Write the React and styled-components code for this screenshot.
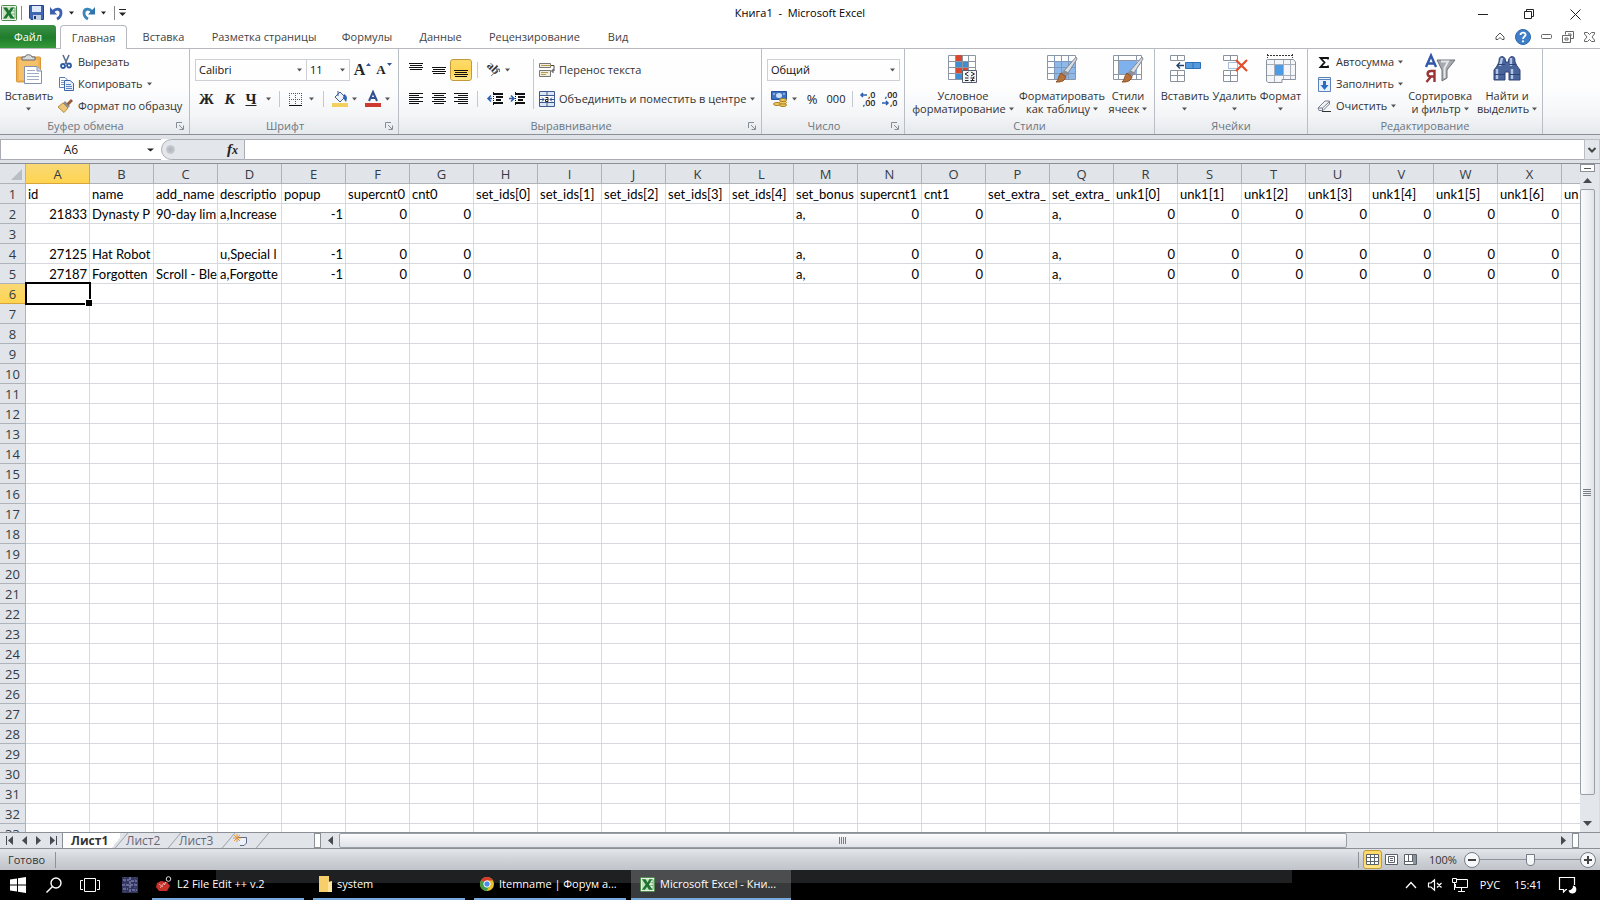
import React from "react";
import styled, { createGlobalStyle, css } from "styled-components";

const ui = '"Open Sans", "Noto Sans", sans-serif';
const line = "#8b9097";

const Global = createGlobalStyle`
  * { box-sizing: border-box; }
  body { margin: 0; background: #fff; font: 11px/16px ${ui}; color: #333; }
  button, input, select { font: inherit; color: inherit; margin: 0; padding: 0; border: 0; background: none; }
  button { white-space: nowrap; }
  svg { display: block; flex: none; overflow: visible; }
`;

const Window = styled.div`
  height: 100vh;
  display: flex;
  flex-direction: column;
  overflow: hidden;
`;

/* ---------- title bar ---------- */
const TitleBar = styled.header`
  display: grid;
  grid-template-columns: 1fr auto 1fr;
  align-items: center;
  height: 25px;
  flex: none;
`;
const QuickAccess = styled.div`
  display: flex;
  align-items: center;
  padding-left: 1px;
`;
const Title = styled.h1`
  margin: 0;
  font-size: 11px;
  font-weight: 400;
  color: #000;
  white-space: pre;
`;
const CaptionButtons = styled.div`
  display: flex;
  justify-content: flex-end;
  padding: 3px 2px 0 0;
`;
const CaptionButton = styled.button`
  width: 46px;
  height: 22px;
  display: grid;
  place-items: center;
`;
const Divider = styled.span`
  width: 1px;
  height: ${(p) => p.$h || 16}px;
  background: ${(p) => p.$c || "#c5c9ce"};
  margin: 0 ${(p) => p.$m || 0}px;
  flex: none;
`;
const IconBtn = styled.button`
  display: inline-flex;
  align-items: center;
  justify-content: ${(p) => p.$justify || "center"};
  width: ${(p) => (p.$w ? p.$w + "px" : "auto")};
  height: ${(p) => p.$h || 22}px;
  gap: ${(p) => p.$gap || 4}px;
  flex: none;
  ${(p) =>
    p.$on &&
    css`
      && { border: 1px solid #c29a3a; }
      border-radius: 3px;
      && { background: linear-gradient(#fddb6c, #ffd452 50%, #ffe88c); }
    `}
`;

/* ---------- ribbon tabs ---------- */
const TabStrip = styled.nav`
  display: flex;
  height: 24px;
  flex: none;
  border-bottom: 1px solid #b6babf;
`;
const FileTab = styled.button`
  && {
    width: 56px;
    height: 23px;
    border-radius: 0 3px 0 0;
    color: #fff;
    background: linear-gradient(#3c9148, #1f7e2b 55%, #35983a);
  }
`;
const RibbonTab = styled.button`
  && {
    width: ${(p) => p.$w}px;
    height: 24px;
    color: #444;
    ${(p) =>
      p.$active &&
      css`
        margin-left: 4px;
        border: 1px solid #b6babf;
        border-bottom: 0;
        border-radius: 4px 4px 0 0;
        background: #fff;
      `}
  }
`;
const TabTools = styled.div`
  margin-left: auto;
  display: flex;
  align-items: center;
  gap: 10px;
  padding-right: 5px;
`;

/* ---------- ribbon ---------- */
const Ribbon = styled.section`
  display: flex;
  height: 86px;
  flex: none;
  background: linear-gradient(#fff, #fdfdfe 50%, #f3f5f7 78%, #e6e9ed);
  border-bottom: 1px solid ${line};
`;
const Group = styled.section`
  flex: 0 0 ${(p) => p.$w}px;
  min-width: 0;
  display: flex;
  flex-direction: column;
  border-right: 1px solid #b9bdc4;
`;
const GroupBody = styled.div`
  height: 69px;
  display: flex;
  padding: ${(p) => p.$pad};
`;
const GroupFooter = styled.footer`
  display: flex;
  align-items: center;
  height: 16px;
  text-align: center;
  color: #6b7680;
  h2 { flex: 1; margin: 0; font-size: 11px; line-height: 16px; font-weight: 400; }
`;
const Stack = styled.div`
  display: flex;
  flex-direction: column;
  flex: none;
  gap: ${(p) => p.$gap || 0}px;
`;
const Row = styled.div`
  display: flex;
  align-items: center;
  height: 22px;
`;
const BigButton = styled.button`
  && {
    width: ${(p) => p.$w}px;
    padding-top: 3px;
    display: flex;
    flex-direction: column;
    align-items: center;
    line-height: 13px;
    flex: none;
  }
`;
const BigLabel = styled.span`
  margin-top: 5px;
  display: flex;
  flex-direction: column;
  align-items: center;
`;
const LabelLine = styled.span`
  display: flex;
  align-items: center;
  gap: 3px;
  height: 13px;
`;
const SmallIcon = styled.span`
  display: grid;
  place-items: center;
  width: 16px;
`;
const SelectBox = styled.span`
  display: grid;
  align-items: center;
  width: ${(p) => p.$w}px;
  height: 22px;
  border: 1px solid #cdd1d6;
  & + & { border-left: 0; }
  select { grid-area: 1 / 1; appearance: none; width: 100%; height: 20px; padding-left: 3px; color: #111; outline: 0; }
  svg { grid-area: 1 / 1; justify-self: end; margin-right: 4px; pointer-events: none; }
`;
const Glyph = styled.span`
  font-family: "Liberation Serif", serif;
  font-weight: 700;
  font-size: ${(p) => p.$s || 15}px;
  line-height: 16px;
  color: #222;
  font-style: ${(p) => (p.$i ? "italic" : "normal")};
  text-decoration: ${(p) => (p.$u ? "underline" : "none")};
`;
const NumGlyph = styled.span`
  font-size: ${(p) => p.$s || 11}px;
  color: #222;
`;
const DecimalIcon = styled.span`
  display: flex;
  flex-direction: column;
  width: 17px;
  font-size: 9px;
  line-height: 8px;
  font-weight: 600;
  color: #222;
`;
const DecimalRow = styled.span`
  display: flex;
  align-items: center;
  justify-content: flex-end;
  gap: 1px;
`;

/* ---------- formula bar ---------- */
const FormulaBar = styled.div`
  display: flex;
  flex: none;
  height: 29px;
  padding: 4px 0 3px;
  background: #dfe2e7;
  border-bottom: 1px solid ${line};
`;
const NameBox = styled.div`
  display: flex;
  align-items: center;
  width: 161px;
  border: 1px solid #a9adb3;
  border-right: 0;
  background: #fff;
  input { width: 140px; text-align: center; font-size: 12px; color: #222; outline: 0; }
`;
const FxWrap = styled.div`
  display: flex;
  background: #fff;
`;
const FxArea = styled.div`
  display: flex;
  align-items: center;
  justify-content: space-between;
  width: 84px;
  padding: 0 6px 0 4px;
  border: 1px solid #a9adb3;
  border-radius: 11px 0 0 11px;
  background: #e3e6ea;
`;
const Knob = styled.span`
  width: 9px;
  height: 9px;
  border-radius: 50%;
  background: radial-gradient(#aeb3ba, #d5d9de);
`;
const Fx = styled.button`
  && { font: italic 700 15px/18px "Liberation Serif", serif; color: #222; }
  small { font-size: 12px; }
`;
const FormulaInput = styled.input`
  && { flex: 1; background: #fff; border: solid #a9adb3; border-width: 1px 0; outline: 0; padding: 0 4px; }
`;
const ExpandButton = styled.button`
  && { width: 16px; display: grid; place-items: center; background: #e3e6ea; border: 1px solid #b9bdc4; }
`;

/* ---------- grid ---------- */
const Workspace = styled.main`
  flex: 1;
  min-height: 0;
  display: flex;
  background: #e3e6ea;
`;
const SheetArea = styled.div`
  flex: 1;
  min-width: 0;
  overflow: hidden;
  background: #fff;
`;
const Sheet = styled.table`
  table-layout: fixed;
  border-collapse: separate;
  border-spacing: 0;
  width: 1626px;
  font: 13px/18px Lato, "Open Sans", sans-serif;
  color: #000;
  col { width: 64px; }
  col:first-child { width: 26px; }
`;
const HeadCell = styled.th`
  height: 20px;
  padding: 0;
  font: 400 13px/18px ${ui};
  color: #333b44;
  background: ${(p) => (p.$on ? "linear-gradient(#f9d976, #ffd44f)" : "#e1e4e9")};
  border: solid ${(p) => (p.$on ? "#d8a23c" : "#aeb3ba")};
  border-width: 0 1px 1px 0;
  svg { margin: 2px 0 0 11px; }
`;
const Cell = styled.td`
  height: 20px;
  padding: 1px 2px 0;
  overflow: hidden;
  white-space: nowrap;
  text-align: ${(p) => (p.$num ? "right" : "left")};
  border: solid #d6d9dd;
  border-width: 0 1px 1px 0;
  ${(p) =>
    p.$selected &&
    css`
      position: relative;
      overflow: visible;
      &::before { content: ""; position: absolute; inset: -2px -2px -2px -1px; border: 2px solid #000; }
      &::after { content: ""; position: absolute; right: -3px; bottom: -3px; width: 6px; height: 6px; background: #000; border: solid #fff; border-width: 1px 0 0 1px; }
    `}
`;
const VScroll = styled.div`
  width: 20px;
  flex: none;
  display: flex;
  flex-direction: column;
  align-items: center;
  padding-right: 5px;
  border-right: 1px solid #d5dbe3;
`;
const SplitBox = styled.button`
  && { width: 15px; height: 8px; border: 1px solid #8b9097; background: #fff; display: grid; place-items: center; flex: none; }
`;
const ScrollButton = styled.button`
  && { width: 16px; height: 17px; display: grid; place-items: center; flex: none; }
`;
const VTrack = styled.div`
  flex: 1;
  width: 15px;
  padding-bottom: 20px;
`;
const Thumb = styled.div`
  display: grid;
  place-items: center;
  border: 1px solid #9a9fa7;
  border-radius: 2px;
`;
const VThumb = styled(Thumb)`
  height: 100%;
  background: linear-gradient(90deg, #fbfbfc, #e2e5e9);
`;

/* ---------- sheet tabs ---------- */
const SheetBar = styled.div`
  display: flex;
  flex: none;
  height: 17px;
  background: #e1e4e9;
  border: solid ${line};
  border-width: 1px 0;
`;
const SheetNav = styled.div`
  display: flex;
  width: 63px;
  padding-left: 3px;
  border-right: 1px solid ${line};
`;
const NavButton = styled.button`
  width: 14px;
  flex: none;
  display: grid;
  place-items: center;
`;
const SheetTab = styled.button`
  && {
    position: relative;
    width: ${(p) => p.$w}px;
    text-align: left;
    padding-left: ${(p) => p.$pl}px;
    font-size: 12px;
    line-height: 15px;
    color: ${(p) => (p.$active ? "#333" : "#667")};
    font-weight: ${(p) => (p.$active ? 700 : 400)};
    background: ${(p) => (p.$active ? "linear-gradient(128deg, #fff 88%, transparent 88%)" : "none")};
  }
  &::after {
    content: "";
    position: absolute;
    right: -2px;
    top: 0;
    height: 15px;
    border-right: 1px solid #9a9fa7;
    transform: skewX(-40deg);
  }
`;
const HScroll = styled.div`
  display: flex;
  flex: 1;
  margin-left: 53px;
  padding-right: 21px;
`;
const Grip = styled.span`
  width: 7px;
  height: 15px;
  flex: none;
  border: 1px solid ${line};
  background: #fff;
`;
const HTrack = styled.div`
  flex: 1;
  display: flex;
`;
const HThumb = styled(Thumb)`
  flex: 0 0 83%;
  height: 15px;
  background: linear-gradient(#fbfbfc, #dfe2e8);
`;
const HArrow = styled.button`
  width: 18px;
  display: grid;
  place-items: center;
`;

/* ---------- status bar ---------- */
const StatusBar = styled.footer`
  display: flex;
  align-items: center;
  flex: none;
  height: 21px;
  padding: 0 4px 0 8px;
  background: linear-gradient(#e3e6e9, #cfd3d8 50%, #c0c4ca);
`;
const Views = styled.div`
  display: flex;
  align-items: center;
  margin-left: auto;
`;
const Zoom = styled.div`
  display: flex;
  align-items: center;
  margin-left: 9px;
  label { width: 35px; }
`;
const RoundButton = styled.button`
  && { width: 16px; height: 16px; border: 1px solid #777d85; border-radius: 50%; background: #f6f7f8; display: grid; place-items: center; flex: none; }
`;
const Range = styled.input`
  && {
    appearance: none;
    width: 100px;
    height: 14px;
    background: linear-gradient(#8d939b, #8d939b) center / 100% 1px no-repeat;
  }
  &::-webkit-slider-thumb {
    appearance: none;
    width: 9px;
    height: 12px;
    border: 1px solid #777d85;
    border-radius: 1px 1px 5px 5px;
    background: #f6f7f8;
  }
`;

/* ---------- taskbar ---------- */
const Taskbar = styled.footer`
  display: flex;
  flex: none;
  height: 30px;
  color: #fff;
  background: linear-gradient(#1f2022, #1f2022) 216px 0 / 1076px 13px no-repeat #000;
`;
const Launcher = styled.button`
  width: ${(p) => p.$w}px;
  flex: none;
  display: grid;
  place-items: center;
`;
const Task = styled.button`
  && {
    display: flex;
    align-items: center;
    gap: 5px;
    width: ${(p) => p.$w}px;
    margin-right: ${(p) => p.$mr || 9}px;
    padding-left: ${(p) => p.$pl || 4}px;
    border-bottom: 2px solid #76a9dc;
    background: ${(p) => (p.$active ? "linear-gradient(#4c4d4f 45%, #393a3c 45%)" : "none")};
  }
`;
const Tray = styled.div`
  display: flex;
  align-items: center;
  margin-left: auto;
  padding-right: 17px;
`;

/* ---------- drawings ---------- */
const Svg = ({ w = 16, h = w, vw = w, vh = vw === w ? h : vw, children }) => (
  <svg width={w} height={h} viewBox={`0 0 ${vw} ${vh}`} fill="none" aria-hidden="true">{children}</svg>
);
const Caret = ({ c = "#555", w = 5 }) => (
  <Svg w={w} h={4}><path d={`M0 .5H${w}L${w / 2} 3.5Z`} fill={c} /></Svg>
);
const Tri = ({ dir, bar }) => (
  <Svg w={9} h={9}>
    <path d={{ l: "M7 0V9L2 4.5Z", r: "M2 0V9L7 4.5Z", u: "M0 7H9L4.5 2Z", d: "M0 2H9L4.5 7Z" }[dir]} fill="#454b52" />
    {bar && <path d={dir === "l" ? "M.5 0V9" : "M8.500 0V9"} stroke="#454b52" />}
  </Svg>
);
const ExcelLogo = ({ s = 16 }) => (
  <Svg w={s} h={s} vw={16} vh={16}>
    <rect x=".5" y=".5" width="15" height="15" rx="1" fill="#eaf4e6" stroke="#4a8a4a" />
    <path d="M2 2h9v12H2z" fill="#c6e2bd" />
    <path d="M11 3h3v10h-3M11 6h3M11 9h3" stroke="#74a874" />
    <path d="M2 2.500h4l2 3.300L10 2.500H13L9.500 8 13.500 13.500H9.500L7.500 10.300 5.300 13.500H2L6 8Z" fill="#1e7432" />
  </Svg>
);
const Save = () => (
  <Svg w={15}>
    <path d="M.5 .5H14.500V14.500H2L.5 13Z" fill="#3f66b0" stroke="#27458a" />
    <path d="M3 1h9v6H3z" fill="#dfe9f8" /><path d="M4 10h8v5H4z" fill="#c4d0e2" /><path d="M5 11h2v3H5z" fill="#223a73" />
  </Svg>
);
const Undo = ({ flip }) => (
  <Svg w={13} h={14}>
    <g transform={flip ? "translate(13 0) scale(-1 1)" : undefined}>
      <path d="M3 5.500C6 2 11 2.500 11 7c0 3-2 5-4 6" stroke={flip ? "#3b86b8" : "#3c62ad"} strokeWidth="2.800" />
      <path d="M0 1V8.500H7Z" fill={flip ? "#2d74ad" : "#3c62ad"} />
    </g>
  </Svg>
);
const Customize = () => (
  <Svg w={7} h={8}><path d="M0 .5H7" stroke="#222" /><path d="M0 3.500H7L3.500 7Z" fill="#222" /></Svg>
);
const Minimize = () => <Svg w={10}><path d="M0 5.500H10" stroke="#222" /></Svg>;
const Restore = () => <Svg w={10}><path d="M.5 2.500H7.500V9.500H.5ZM2.500 2.500V.5H9.500V7.500H7.500" stroke="#222" /></Svg>;
const Close = () => <Svg w={11}><path d="M.5 .5L10.500 10.500M10.500 .5L.5 10.500" stroke="#222" /></Svg>;
const Collapse = () => <Svg w={10} h={9}><path d="M1 5L5 1 9 5V7.500H7L5 5.500 3 7.500H1Z" stroke="#555" /></Svg>;
const Help = () => (
  <Svg w={16}><circle cx="8" cy="8" r="7.500" fill="#3e7fc8" stroke="#2e68ad" /><path d="M5.500 6C5.500 2.500 11 3 10.500 6 10.200 7.600 8 7.800 8 10" stroke="#fff" strokeWidth="1.800" /><circle cx="8" cy="12.300" r="1.100" fill="#fff" /></Svg>
);
const MdiMin = () => <Svg w={11} h={5}><rect x=".5" y=".5" width="10" height="4" rx="1" stroke="#666" /></Svg>;
const MdiRestore = () => <Svg w={12}><path d="M3.500 3.500V.5H11.500V7.500H8.500M.5 4.500H8.500V11.500H.5ZM3 7H6V9H3ZM6 3H9V5" stroke="#666" /></Svg>;
const MdiClose = () => <Svg w={11} h={10}><path d="M.5 .5H3.500L5.500 2.500 7.500 .5H10.500V2L8 5 10.500 8V9.500H7.500L5.500 7.500 3.500 9.500H.5V8L3 5 .5 2Z" stroke="#666" /></Svg>;
const Launch = () => <Svg w={8}><path d="M.5 6V.5H6M3 3L7 7M7.500 3.500V7.500H3.500" stroke="#858c94" /></Svg>;

const Paste = () => (
  <Svg w={28} h={30}>
    <rect x="1.500" y="3" width="24" height="25" rx="1" fill="#efb04d" stroke="#d8963a" />
    <path d="M4 6H23V26H4Z" fill="#f4c069" />
    <path d="M7 6V3H10C10 0 17 0 17 3H20V6Z" fill="#d9dcdf" stroke="#666" />
    <path d="M9.500 12.500H22L26.500 17V29.500H9.500Z" fill="#fff" stroke="#8291ad" />
    <path d="M22 12.500V17H26.500" fill="#d3dced" stroke="#8291ad" />
    <path d="M12 16.500H20M12 19.500H24M12 22.500H24M12 25.500H24" stroke="#9dabc5" />
  </Svg>
);
const Cut = () => (
  <Svg w={12} h={14}>
    <path d="M3 0L7 9M9 0L5 9" stroke="#5b6f8d" strokeWidth="1.600" /><circle cx="3" cy="11" r="2" stroke="#2c5aa3" strokeWidth="1.800" /><circle cx="9" cy="10.500" r="2" stroke="#2c5aa3" strokeWidth="1.800" />
  </Svg>
);
const Copy = () => (
  <Svg w={15} h={14}>
    <path d="M.5 .5H6L8.500 3V10.500H.5Z" fill="#fff" stroke="#5a7dbb" /><path d="M2 3.500H5M2 5.500H6M2 7.500H6" stroke="#7c9bd0" />
    <path d="M5.500 3.500H11L14.500 6.500V13.500H5.500Z" fill="#e8f0fc" stroke="#3c64ab" /><path d="M7 7.500H12M7 9.500H13M7 11.500H13" stroke="#5a84c8" />
  </Svg>
);
const Brush = () => (
  <Svg w={16} h={14}>
    <path d="M0 8L5 4 10 9 6 13.500Z" fill="#ecc777" stroke="#b98c3b" /><path d="M5 4L7 2 12 7 10 9Z" fill="#8e8c95" /><path d="M8.500 4.500L13 0 15 2 10.500 6.500Z" fill="#9b5b36" />
  </Svg>
);
const SizeMark = ({ up }) => (
  <Svg w={5} h={16}><path d={up ? "M0 4L2.500 1 5 4Z" : "M0 1L2.500 4 5 1Z"} fill="#3355a0" /></Svg>
);
const Borders = () => (
  <Svg w={13}><path d="M.5 0V12M6.500 0V12M12.500 0V12M0 .5H13M0 6.500H13" stroke="#555" strokeDasharray="1 1" /><path d="M0 12.500H13" stroke="#111" /></Svg>
);
const Fill = () => (
  <Svg w={16}>
    <path d="M3 6L8 1 13 6 8 11Z" fill="#eef3fa" stroke="#3b5c94" /><path d="M6 0V5" stroke="#3b5c94" /><path d="M12 3C16 5 15 8 14 11L11 7Z" fill="#2f63b4" /><path d="M0 12H16V16H0Z" fill="#f3cf5e" />
  </Svg>
);
const FontColor = () => (
  <Svg w={16}><path d="M4 10L8 1 12 10M5.500 7H10.500" stroke="#33508f" strokeWidth="2" /><path d="M0 12H16V16H0Z" fill="#cc3a30" /></Svg>
);
const Lines = ({ rows, h = 14 }) => (
  <Svg w={14} h={h}>{rows.map(([y, x1, x2]) => <path key={y} d={`M${x1} ${y + 0.5}H${x2}`} stroke="#111" />)}</Svg>
);
const vAlign = (o) => [[o, 0, 14], [o + 2, 1, 13], [o + 4, 0, 14], [o + 6, 1, 13]];
const textAlign = (k) => [1, 3, 5, 7, 9, 11].map((y, i) => {
  const len = i % 2 ? 10 : 14;
  const x = k === "l" ? 0 : k === "r" ? 14 - len : (14 - len) / 2;
  return [y, x, x + len];
});
const Orient = () => (
  <Svg w={15} h={14}>
    <g transform="rotate(45 6 6)" fill="#333" fontFamily="Liberation Serif" fontWeight="700" fontSize="12"><text x="0" y="8">ab</text></g>
    <path d="M5 13L13 6M10 6H13.500V9" stroke="#777" />
  </Svg>
);
const Indent = ({ right }) => (
  <Svg w={16} h={14}>
    <path d="M6 2H16M9 5H16M9 8H14M6 11H16" stroke="#111" strokeWidth="2" /><path d="M6.500 0V14" stroke="#111" strokeDasharray="1 1" />
    <path d={right ? "M0 6.500H4M2 3.500L5 6.500 2 9.500" : "M5 6.500H1M4 3.500L1 6.500 4 9.500"} stroke="#2d5fb0" strokeWidth="1.500" />
  </Svg>
);
const Wrap = () => (
  <Svg w={16}><path d="M.5 1.500H11.500V5.500H.5ZM.5 8.500H11.500V14.500H.5Z" fill="#f3efe0" stroke="#777" /><path d="M2 3.500H12M2 10.500H9M2 12.500H7" stroke="#b49a4c" /><path d="M12 3.500H15V9H13M14.500 7L12.500 9 14.500 11" stroke="#444" /></Svg>
);
const Merge = () => (
  <Svg w={16}>
    <path d="M.5 .5H15.500V15.500H.5Z" fill="#dbe6f6" stroke="#3e5a8e" /><path d="M0 4.500H16M0 11.500H16M8 0V4M8 12V16" stroke="#3e5a8e" /><path d="M1 5H15V11H1Z" fill="#fff" />
    <path d="M1 8.500H5M11 8.500H15M3 6.500L5 8.500 3 10.500M13 6.500L11 8.500 13 10.500" stroke="#2b4f8d" /><path d="M6.500 6.500H9V10.500H6.500V8.500H9" stroke="#222" />
  </Svg>
);
const Currency = () => (
  <Svg w={17} h={16}>
    <path d="M.5 .5H15.500V8.500H.5Z" fill="#3e72c2" stroke="#24519c" /><ellipse cx="8" cy="4.500" rx="3" ry="2.500" fill="#cfe0f6" /><path d="M2 3H4M12 3H14" stroke="#cfe0f6" />
    <g fill="#f2cd62" stroke="#a67c24"><ellipse cx="6" cy="13" rx="3.500" ry="1.500" /><ellipse cx="12" cy="14" rx="3.500" ry="1.500" /><ellipse cx="12" cy="11.500" rx="3.500" ry="1.500" /><ellipse cx="12" cy="9" rx="3.500" ry="1.500" /></g>
  </Svg>
);
const ShiftArrow = ({ right }) => (
  <Svg w={7} h={6}><path d={right ? "M0 3H6M4 1L6 3 4 5" : "M7 3H1M3 1L1 3 3 5"} stroke="#2d5fb0" strokeWidth="1.500" /></Svg>
);
const Decimal = ({ inc }) => (
  <DecimalIcon>
    <DecimalRow>{inc ? <><ShiftArrow />,0</> : ",00"}</DecimalRow>
    <DecimalRow>{inc ? ",00" : <><ShiftArrow right />,0</>}</DecimalRow>
  </DecimalIcon>
);
const CondFormat = () => (
  <Svg w={30} h={30}>
    <path d="M.5 1.500H27.500V25.500H.5Z" fill="#fff" stroke="#8b95a3" />
    <path d="M7 1H14V7H7ZM7 14H20V19H7Z" fill="#d9472f" /><path d="M7 7H20V13H7ZM7 19H14V25H7Z" fill="#3f8fd0" />
    <path d="M0 7.500H27M0 13.500H27M0 19.500H27M7.500 1V25M14.500 1V25M20.500 1V25" stroke="#8b95a3" />
    <path d="M14.500 16.500H28.500V28.500H14.500Z" fill="#f4f6fa" stroke="#555f70" /><path d="M20.500 18L17 20 20.500 22M17 24H20.500M17 26.500H20.500M23 18L26.500 20 23 22M22.500 24H26.500M22.500 26.500H26.500M26 22.500L23.500 27.500" stroke="#222" />
  </Svg>
);
const BigBrush = () => (
  <g><path d="M29 3L30 5 21 19 17 17Z" fill="#d9dde3" stroke="#7e8792" /><path d="M17 16L22 19 19 23 14 20Z" fill="#8d8f98" /><path d="M14 19L19 23C17 28 13 28 9 28 12 26 11 22 14 19Z" fill="#b8713a" stroke="#8a4f24" /></g>
);
const TableFormat = () => (
  <Svg w={30} h={30}>
    <path d="M.5 1.500H28.500V25.500H.5Z" fill="#fff" stroke="#8b95a3" /><path d="M7 7H28V25H7Z" fill="#8db9ea" />
    <path d="M0 7.500H28M0 13.500H28M0 19.500H28M7.500 1V25M14.500 1V25M21.500 1V25" stroke="#7f97b8" /><BigBrush />
  </Svg>
);
const CellStyles = () => (
  <Svg w={30} h={30}>
    <path d="M.5 1.500H28.500V25.500H.5Z" fill="#fff" stroke="#8b95a3" /><path d="M0 6.500H28M0 20.500H28M5.500 1V25M23.500 1V25" stroke="#8b95a3" /><path d="M6 7H24V20H6Z" fill="#7fb2ec" /><BigBrush />
  </Svg>
);
const InsertCells = () => (
  <Svg w={32} h={30}>
    <path d="M1.500 1.500H15.500V6.500H1.500ZM8.500 1.500V6.500M1.500 16.500H15.500V27.500H1.500ZM8.500 16.500V27.500M1.500 21.500H15.500" fill="#fff" stroke="#8a929d" />
    <path d="M16.500 8.500H31.500V14.500H16.500ZM24 8.500V14.500" fill="#549add" stroke="#2e6fb5" /><path d="M15 11.500H8M11 8.500L8 11.500 11 14.500" stroke="#23436f" strokeWidth="1.400" />
  </Svg>
);
const DeleteCells = () => (
  <Svg w={26} h={30}>
    <path d="M1.500 1.500H15.500V6.500H1.500ZM8.500 1.500V6.500M1.500 16.500H15.500V27.500H1.500ZM8.500 16.500V27.500M1.500 21.500H15.500" fill="#fff" stroke="#8a929d" />
    <path d="M6.500 8.500H15.500V14.500H6.500Z" stroke="#4b7fc4" strokeDasharray="1 1" /><path d="M14 6L25 17M25 6L14 17" stroke="#e0502a" strokeWidth="2.200" />
  </Svg>
);
const FormatCells = () => (
  <Svg w={32} h={30}>
    <path d="M2 1.500H28M2.500 0V4M27.500 0V4" stroke="#333" strokeDasharray="2 1" /><path d="M2.500 5.500H28.500L30.500 8V25.500H17V28.500H3L1.500 27V6Z" fill="#f4f6f9" stroke="#8a929d" />
    <path d="M2 10.500H30M2 21.500H30M9.500 6V28M18.500 6V25M25.500 6V25" stroke="#a7aeb8" /><path d="M10 11H18V21H10Z" fill="#4d9be4" />
  </Svg>
);
const Sigma = () => <Svg w={11} h={11}><path d="M9 2.500V1H1.500L5.500 5.500 1.500 10H9V8.500" stroke="#111" strokeWidth="1.800" /></Svg>;
const FillDown = () => (
  <Svg w={13} h={15}><path d="M.5 .5H12.500V14.500H.5Z" fill="#e9f1fb" stroke="#5b83bd" /><path d="M.5 2.500H12.500" stroke="#5b83bd" /><path d="M5 4H8V8H10.500L6.500 13 2.500 8H5Z" fill="#2a6cc4" /></Svg>
);
const Eraser = () => (
  <Svg w={14} h={12}><path d="M1 8L8 1H12.500V4L6 10.500H2Z" fill="#f3f4f7" stroke="#777f8c" /><path d="M1 8H5.500L12.500 1.500M5.500 8V10.500" stroke="#777f8c" /><path d="M5 11.500H14" stroke="#333" /></Svg>
);
const SortFilter = () => (
  <Svg w={32} h={30}>
    <path d="M13 6H31L23 16V24L18 27V16Z" fill="#a5a9ae" stroke="#6e7378" /><path d="M17 7.500H24L20.500 14V24" stroke="#e3e5e8" strokeWidth="2" />
    <path d="M2 13L7 1.500 12 13M4 9.500H10" stroke="#3159a8" strokeWidth="2.400" /><path d="M10.500 28V17H7C2.500 17 2.500 22.500 7 22.500H10.500M7 22.500L2.500 28" stroke="#9a3434" strokeWidth="2.400" />
  </Svg>
);
const Binoculars = () => (
  <Svg w={28} h={30}>
    <path d="M6 8C6 3 7 3 9 2.500 12 3 12.500 5 12.500 8H15.500C15.500 5 16 3 19 2.500 21 3 22 3 22 8L24 12 27 16V26H16V18H12V26H1V16L4 12Z" fill="#4a659c" stroke="#2e4474" />
    <path d="M4 15V25M19 15V25M9 4L7 12M18 4V12" stroke="#b4c6e8" strokeWidth="2.400" /><path d="M1 20.500H12M16 20.500H27M5 10.500H12M16 10.500H23" stroke="#2e4474" />
  </Svg>
);
const Corner = () => <Svg w={12} h={13}><path d="M11 1V12H0Z" fill="#b9bec6" /></Svg>;
const NewSheet = () => (
  <Svg w={15} h={13}><path d="M4.500 3.500H13.500V9L11 11.500H7" fill="#eef1f7" stroke="#5d6a8c" /><path d="M4 0V8M0 4H8M1 1L7 7M7 1L1 7" stroke="#e2973a" /></Svg>
);
const ViewIcon = ({ k }) => (
  <Svg w={13} h={11}>
    <path d="M.5 .5H12.500V10.500H.5Z" fill="#fff" stroke="#5c626a" />
    {k === 0 && <path d="M0 3.500H13M0 7.500H13M4.500 0V11M8.500 0V11" stroke="#5c626a" />}
    {k === 1 && <path d="M3.500 2.500H9.500V8.500H3.500ZM5 4.500H8M5 6.500H8" stroke="#5c626a" />}
    {k === 2 && <><path d="M9 1H12V10H9Z" fill="#8d939b" /><path d="M.5 7.500H9M4.500 0V7M8.500 0V7" stroke="#5c626a" /></>}
  </Svg>
);
const WinLogo = () => <Svg w={16}><path d="M0 2.500L7 1.500V7.500H0ZM8 1.300L16 0V7.500H8ZM0 8.500H7V14.500L0 13.500ZM8 8.500H16V16L8 14.700Z" fill="#fff" /></Svg>;
const Search = () => <Svg w={16}><circle cx="10" cy="6" r="5" stroke="#fff" strokeWidth="1.400" /><path d="M6.500 9.500L.5 15.500" stroke="#fff" strokeWidth="1.400" /></Svg>;
const TaskView = () => <Svg w={20} h={14}><path d="M4.500 .5H15.500V13.500H4.500ZM3 2.500H.5V11.500H3M17 2.500H19.500V11.500H17" stroke="#fff" /></Svg>;
const PixelApp = () => <Svg w={16}><path d="M0 0H16V16H0Z" fill="#33355c" /><path d="M8 0V16M0 8H16M1 3H7M9 4H15M1 12H6M10 13H15" stroke="#9a9fd0" strokeDasharray="3 1" /><path d="M3 0V16M13 0V16" stroke="#565b94" strokeDasharray="1 1" /></Svg>;
const L2Icon = () => (
  <Svg w={16}><path d="M1 7L5 5 11 6 14 10 11 15H3L0 11Z" fill="#c8302a" /><path d="M3 8L7 11M4 12L8 7" stroke="#f3a59b" /><circle cx="12.500" cy="3" r="2.300" stroke="#ddd" /><path d="M10 6L8 9" stroke="#ddd" /></Svg>
);
const Folder = () => <Svg w={13} h={16}><path d="M0 0H10V6H13V16H0Z" fill="#f6cf6b" /><path d="M9 6L13 5V16H9Z" fill="#ffe49a" /></Svg>;
const Chrome = () => (
  <Svg w={14}><circle cx="7" cy="7" r="7" fill="#e9c12e" /><path d="M7 7L1 3.500A7 7 0 0 1 13 3.500H7Z" fill="#d93b2b" /><path d="M7 7L1 3.500A7 7 0 0 0 6.500 14L9.500 9Z" fill="#3c9c48" /><circle cx="7" cy="7" r="3.200" fill="#4a8af0" stroke="#fff" /></Svg>
);
const Chevron = () => <Svg w={12} h={8}><path d="M1 7L6 1.500 11 7" stroke="#fff" strokeWidth="1.300" /></Svg>;
const Speaker = () => <Svg w={15} h={12}><path d="M.5 4H3L6.500 .8V11.200L3 8H.5ZM9 4L13.500 8.500M13.500 4L9 8.500" stroke="#fff" strokeWidth="1.200" /></Svg>;
const Network = () => <Svg w={16} h={14}><path d="M5 1.500H15.500V9.500H3.500V6M.5 .5H4.500V4.500H.5ZM2.500 5V12M9.500 10V13M6 13.500H13" stroke="#fff" /></Svg>;
const Notify = () => <Svg w={16}><path d="M15.500 8V.5H.5V12.500H4.500V15L7 12.500H8" stroke="#fff" strokeWidth="1.200" /><path d="M14 8.500A4 4 0 1 1 9.500 13.500 4.500 4.500 0 0 0 14 8.500Z" fill="#fff" /></Svg>;

/* ---------- data ---------- */
const columns = "ABCDEFGHIJKLMNOPQRSTUVWXY".split("");
const headings = [
  "id", "name", "add_name", "descriptio", "popup", "supercnt0", "cnt0",
  "set_ids[0]", "set_ids[1]", "set_ids[2]", "set_ids[3]", "set_ids[4]",
  "set_bonus", "supercnt1", "cnt1", "set_extra_", "set_extra_",
  ...Array.from({ length: 7 }, (_, i) => `unk1[${i}]`), "un",
];
const item = (id, name, add, desc) => [
  id, name, add, desc, -1, 0, 0, "", "", "", "", "", "a,", 0, 0, "", "a,", ...Array(7).fill(0), "",
];
const cells = {
  1: headings,
  2: item(21833, "Dynasty P", "90-day lim", "a,Increase"),
  4: item(27125, "Hat Robot", "", "u,Special l"),
  5: item(27187, "Forgotten", "Scroll - Ble", "a,Forgotte"),
};
const ribbonTabs = [
  ["Главная", 67], ["Вставка", 73], ["Разметка страницы", 128], ["Формулы", 78],
  ["Данные", 69], ["Рецензирование", 119], ["Вид", 48],
];

const RibbonGroup = ({ title, w, pad, launch, children }) => (
  <Group $w={w} aria-label={title}>
    <GroupBody $pad={pad}>{children}</GroupBody>
    <GroupFooter>
      <h2>{title}</h2>
      {launch && <IconBtn $w={18} $h={16} aria-label={`Параметры: ${title}`}><Launch /></IconBtn>}
    </GroupFooter>
  </Group>
);
const Big = ({ w, icon, lines }) => (
  <BigButton $w={w}>
    {icon}
    <BigLabel>
      <LabelLine>{lines[0]}</LabelLine>
      <LabelLine>{lines[1]}<Caret /></LabelLine>
    </BigLabel>
  </BigButton>
);
const Small = ({ icon, label, caret }) => (
  <IconBtn $justify="flex-start">
    <SmallIcon>{icon}</SmallIcon>
    {label}
    {caret && <Caret />}
  </IconBtn>
);

export default function App() {
  return (
    <Window>
      <Global />
      <TitleBar>
        <QuickAccess>
          <ExcelLogo />
          <Divider $h={14} $c="#888" $m={4} />
          <IconBtn $w={20} aria-label="Сохранить"><Save /></IconBtn>
          <IconBtn $w={32} $gap={6} aria-label="Отменить"><Undo /><Caret c="#222" /></IconBtn>
          <IconBtn $w={32} $gap={6} aria-label="Вернуть"><Undo flip /><Caret c="#222" /></IconBtn>
          <Divider $h={14} $c="#888" $m={4} />
          <IconBtn aria-label="Настройка панели"><Customize /></IconBtn>
        </QuickAccess>
        <Title>{"Книга1  -  Microsoft Excel"}</Title>
        <CaptionButtons>
          <CaptionButton aria-label="Свернуть"><Minimize /></CaptionButton>
          <CaptionButton aria-label="Восстановить"><Restore /></CaptionButton>
          <CaptionButton aria-label="Закрыть"><Close /></CaptionButton>
        </CaptionButtons>
      </TitleBar>

      <TabStrip>
        <FileTab>Файл</FileTab>
        {ribbonTabs.map(([t, w], i) => <RibbonTab key={t} $w={w} $active={i === 0}>{t}</RibbonTab>)}
        <TabTools>
          <IconBtn aria-label="Свернуть ленту"><Collapse /></IconBtn>
          <IconBtn aria-label="Справка"><Help /></IconBtn>
          <IconBtn aria-label="Свернуть книгу"><MdiMin /></IconBtn>
          <IconBtn aria-label="Восстановить книгу"><MdiRestore /></IconBtn>
          <IconBtn aria-label="Закрыть книгу"><MdiClose /></IconBtn>
        </TabTools>
      </TabStrip>

      <Ribbon>
        <RibbonGroup title="Буфер обмена" w={190} pad="2px 0 0" launch>
          <Big w={58} icon={<Paste />} lines={["Вставить", ""]} />
          <Stack>
            <Small icon={<Cut />} label="Вырезать" />
            <Small icon={<Copy />} label="Копировать" caret />
            <Small icon={<Brush />} label="Формат по образцу" />
          </Stack>
        </RibbonGroup>
        <RibbonGroup title="Шрифт" w={209} pad="10px 5px 0" launch>
          <Stack $gap={7}>
            <Row>
              <SelectBox $w={112}><select aria-label="Шрифт"><option>Calibri</option></select><Caret /></SelectBox>
              <SelectBox $w={43}><select aria-label="Размер шрифта"><option>11</option></select><Caret /></SelectBox>
              <IconBtn $w={25} $gap={1} aria-label="Увеличить размер"><Glyph $s={16}>A</Glyph><SizeMark up /></IconBtn>
              <IconBtn $w={18} $gap={1} aria-label="Уменьшить размер"><Glyph $s={13}>A</Glyph><SizeMark /></IconBtn>
            </Row>
            <Row>
              <IconBtn $w={23} aria-label="Полужирный"><Glyph>Ж</Glyph></IconBtn>
              <IconBtn $w={23} aria-label="Курсив"><Glyph $i>К</Glyph></IconBtn>
              <IconBtn $w={34} $gap={9} aria-label="Подчеркнутый"><Glyph $u>Ч</Glyph><Caret /></IconBtn>
              <Divider $m={4} />
              <IconBtn $w={35} $gap={7} aria-label="Границы"><Borders /><Caret /></IconBtn>
              <Divider $m={4} />
              <IconBtn $w={33} aria-label="Цвет заливки"><Fill /><Caret /></IconBtn>
              <IconBtn $w={33} aria-label="Цвет текста"><FontColor /><Caret /></IconBtn>
            </Row>
          </Stack>
        </RibbonGroup>
        <RibbonGroup title="Выравнивание" w={363} pad="10px 5px 0" launch>
          <Stack $gap={7}>
            <Row>
              <IconBtn $w={23} aria-label="По верхнему краю"><Lines rows={vAlign(0)} /></IconBtn>
              <IconBtn $w={23} aria-label="По середине"><Lines rows={vAlign(4)} /></IconBtn>
              <IconBtn $w={22} $on aria-label="По нижнему краю"><Lines rows={vAlign(7)} /></IconBtn>
              <Divider $m={5} />
              <IconBtn $w={30} aria-label="Ориентация"><Orient /><Caret /></IconBtn>
            </Row>
            <Row>
              <IconBtn $w={23} aria-label="По левому краю"><Lines rows={textAlign("l")} /></IconBtn>
              <IconBtn $w={23} aria-label="По центру"><Lines rows={textAlign("c")} /></IconBtn>
              <IconBtn $w={22} aria-label="По правому краю"><Lines rows={textAlign("r")} /></IconBtn>
              <Divider $m={5} />
              <IconBtn $w={23} aria-label="Уменьшить отступ"><Indent /></IconBtn>
              <IconBtn $w={22} aria-label="Увеличить отступ"><Indent right /></IconBtn>
            </Row>
          </Stack>
          <Divider $h={50} $m={5} />
          <Stack $gap={7}>
            <Small icon={<Wrap />} label="Перенос текста" />
            <Small icon={<Merge />} label="Объединить и поместить в центре" caret />
          </Stack>
        </RibbonGroup>
        <RibbonGroup title="Число" w={143} pad="10px 4px 0 5px" launch>
          <Stack $gap={7}>
            <Row><SelectBox $w={133}><select aria-label="Числовой формат"><option>Общий</option></select><Caret /></SelectBox></Row>
            <Row>
              <IconBtn $w={34} aria-label="Финансовый формат"><Currency /><Caret /></IconBtn>
              <IconBtn $w={22}><NumGlyph $s={13}>%</NumGlyph></IconBtn>
              <IconBtn $w={26}><NumGlyph>000</NumGlyph></IconBtn>
              <Divider $m={3} />
              <IconBtn $w={22} aria-label="Увеличить разрядность"><Decimal inc /></IconBtn>
              <IconBtn $w={22} aria-label="Уменьшить разрядность"><Decimal /></IconBtn>
            </Row>
          </Stack>
        </RibbonGroup>
        <RibbonGroup title="Стили" w={250} pad="2px 4px 0">
          <Big w={108} icon={<CondFormat />} lines={["Условное", "форматирование"]} />
          <Big w={90} icon={<TableFormat />} lines={["Форматировать", "как таблицу"]} />
          <Big w={42} icon={<CellStyles />} lines={["Стили", "ячеек"]} />
        </RibbonGroup>
        <RibbonGroup title="Ячейки" w={153} pad="2px 4px 0">
          <Big w={52} icon={<InsertCells />} lines={["Вставить", ""]} />
          <Big w={47} icon={<DeleteCells />} lines={["Удалить", ""]} />
          <Big w={45} icon={<FormatCells />} lines={["Формат", ""]} />
        </RibbonGroup>
        <RibbonGroup title="Редактирование" w={235} pad="2px 4px 0 8px">
          <Stack>
            <Small icon={<Sigma />} label="Автосумма" caret />
            <Small icon={<FillDown />} label="Заполнить" caret />
            <Small icon={<Eraser />} label="Очистить" caret />
          </Stack>
          <Big w={74} icon={<SortFilter />} lines={["Сортировка", "и фильтр"]} />
          <Big w={60} icon={<Binoculars />} lines={["Найти и", "выделить"]} />
        </RibbonGroup>
      </Ribbon>

      <FormulaBar>
        <NameBox><input aria-label="Имя" defaultValue="A6" /><IconBtn $w={19} $h={18} aria-label="Список имен"><Caret c="#222" w={7} /></IconBtn></NameBox>
        <FxWrap><FxArea><Knob /><Fx aria-label="Вставить функцию">f<small>x</small></Fx></FxArea></FxWrap>
        <FormulaInput aria-label="Строка формул" />
        <ExpandButton aria-label="Развернуть строку формул"><Svg w={8} h={6}><path d="M.5 1L4 4.500 7.500 1" stroke="#444" strokeWidth="2" /></Svg></ExpandButton>
      </FormulaBar>

      <Workspace>
        <SheetArea>
          <Sheet>
            <colgroup><col />{columns.map((c) => <col key={c} />)}</colgroup>
            <thead>
              <tr>
                <HeadCell aria-label="Выделить все"><Corner /></HeadCell>
                {columns.map((c) => <HeadCell key={c} scope="col" $on={c === "A"}>{c}</HeadCell>)}
              </tr>
            </thead>
            <tbody>
              {Array.from({ length: 33 }, (_, r) => r + 1).map((r) => (
                <tr key={r}>
                  <HeadCell scope="row" $on={r === 6}>{r}</HeadCell>
                  {columns.map((c, i) => {
                    const v = cells[r] ? cells[r][i] : "";
                    return <Cell key={c} $num={typeof v === "number"} $selected={r === 6 && c === "A"}>{v}</Cell>;
                  })}
                </tr>
              ))}
            </tbody>
          </Sheet>
        </SheetArea>
        <VScroll>
          <SplitBox aria-label="Разделить"><Svg w={7} h={1}><path d="M0 .5H7" stroke="#555" /></Svg></SplitBox>
          <ScrollButton aria-label="Вверх"><Tri dir="u" /></ScrollButton>
          <VTrack><VThumb><Svg w={8} h={7}><path d="M0 .5H8M0 2.500H8M0 4.500H8M0 6.500H8" stroke="#777d85" /></Svg></VThumb></VTrack>
          <ScrollButton aria-label="Вниз"><Tri dir="d" /></ScrollButton>
        </VScroll>
      </Workspace>

      <SheetBar>
        <SheetNav>
          <NavButton aria-label="Первый лист"><Tri dir="l" bar /></NavButton>
          <NavButton aria-label="Предыдущий лист"><Tri dir="l" /></NavButton>
          <NavButton aria-label="Следующий лист"><Tri dir="r" /></NavButton>
          <NavButton aria-label="Последний лист"><Tri dir="r" bar /></NavButton>
        </SheetNav>
        <SheetTab $w={57} $pl={8} $active>Лист1</SheetTab>
        <SheetTab $w={53} $pl={6}>Лист2</SheetTab>
        <SheetTab $w={54} $pl={6}>Лист3</SheetTab>
        <SheetTab $w={34} $pl={6} aria-label="Вставить лист"><NewSheet /></SheetTab>
        <HScroll>
          <Grip />
          <HArrow aria-label="Влево"><Tri dir="l" /></HArrow>
          <HTrack><HThumb><Svg w={8} h={7}><path d="M.5 0V7M2.500 0V7M4.500 0V7M6.500 0V7" stroke="#777d85" /></Svg></HThumb></HTrack>
          <HArrow aria-label="Вправо"><Tri dir="r" /></HArrow>
          <Grip />
        </HScroll>
      </SheetBar>

      <StatusBar>
        <span>Готово</span>
        <Divider $m={10} $c="#8d939b" />
        <Views>
          <Divider $m={4} $c="#8d939b" />
          <IconBtn $w={19} $h={19} $on aria-label="Обычный"><ViewIcon k={0} /></IconBtn>
          <IconBtn $w={18} $h={19} aria-label="Разметка страницы"><ViewIcon k={1} /></IconBtn>
          <IconBtn $w={20} $h={19} aria-label="Страничный"><ViewIcon k={2} /></IconBtn>
        </Views>
        <Zoom>
          <label htmlFor="zoom">100%</label>
          <RoundButton aria-label="Уменьшить"><Svg w={8}><path d="M0 4H8" stroke="#444" strokeWidth="2" /></Svg></RoundButton>
          <Range id="zoom" type="range" min="0" max="100" defaultValue="50" />
          <RoundButton aria-label="Увеличить"><Svg w={8}><path d="M0 4H8M4 0V8" stroke="#444" strokeWidth="2" /></Svg></RoundButton>
        </Zoom>
      </StatusBar>

      <Taskbar>
        <Launcher $w={36} aria-label="Пуск"><WinLogo /></Launcher>
        <Launcher $w={36} aria-label="Поиск"><Search /></Launcher>
        <Launcher $w={36} aria-label="Представление задач"><TaskView /></Launcher>
        <Launcher $w={44} aria-label="Приложение"><PixelApp /></Launcher>
        <Task $w={152}><L2Icon />L2 File Edit ++ v.2</Task>
        <Task $w={152} $pl={6}><Folder />system</Task>
        <Task $w={152} $pl={6} $mr={5}><Chrome />Itemname | Форум а...</Task>
        <Task $w={160} $pl={9} $active><ExcelLogo s={15} />Microsoft Excel - Кни...</Task>
        <Tray>
          <Launcher $w={28} aria-label="Скрытые значки"><Chevron /></Launcher>
          <Launcher $w={20} aria-label="Громкость"><Speaker /></Launcher>
          <Launcher $w={30} aria-label="Сеть"><Network /></Launcher>
          <Launcher $w={30}>РУС</Launcher>
          <Launcher $w={46}>15:41</Launcher>
          <Launcher $w={32} aria-label="Уведомления"><Notify /></Launcher>
        </Tray>
      </Taskbar>
    </Window>
  );
}
